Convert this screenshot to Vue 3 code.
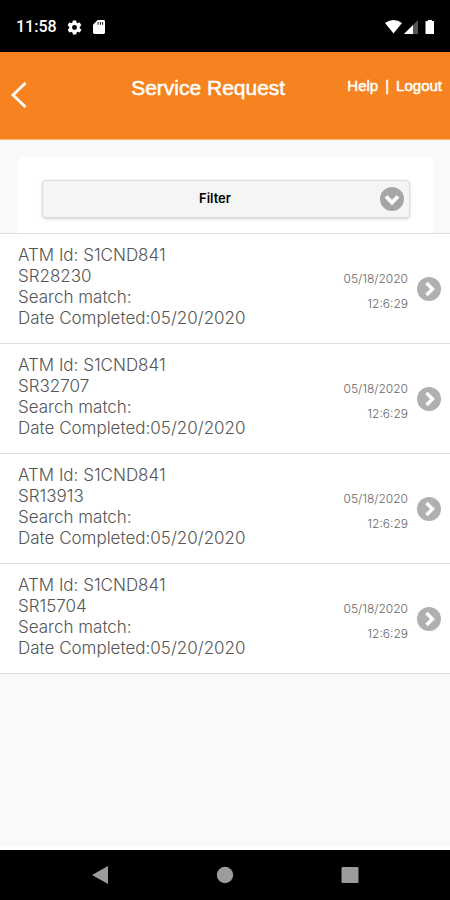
<script setup>
const requests = [
  { atm: 'S1CND841', sr: 'SR28230', completed: '05/20/2020', date: '05/18/2020', time: '12:6:29' },
  { atm: 'S1CND841', sr: 'SR32707', completed: '05/20/2020', date: '05/18/2020', time: '12:6:29' },
  { atm: 'S1CND841', sr: 'SR13913', completed: '05/20/2020', date: '05/18/2020', time: '12:6:29' },
  { atm: 'S1CND841', sr: 'SR15704', completed: '05/20/2020', date: '05/18/2020', time: '12:6:29' }
]
</script>

<template>
  <div class="screen">
    <div class="status">
      <span class="clock">11:58</span>
      <svg class="gear" viewBox="0 0 24 24" aria-hidden="true">
        <path fill="#fff" fill-rule="evenodd" d="M19.4 13c0-.3.1-.6.1-1s0-.7-.1-1l2.1-1.700c.2-.1.2-.4.1-.6l-2-3.500c-.1-.2-.4-.3-.6-.2l-2.500 1c-.5-.4-1.100-.7-1.700-1l-.4-2.600c0-.2-.2-.4-.4-.4h-4c-.3 0-.5.2-.5.4l-.4 2.600c-.6.3-1.200.6-1.700 1l-2.500-1c-.2-.1-.5 0-.6.2l-2 3.500c-.1.2-.1.500.1.600L4.600 11c0 .3-.1.600-.1 1s0 .7.1 1l-2.100 1.700c-.2.100-.2.400-.1.600l2 3.500c.1.200.4.300.6.200l2.500-1c.5.400 1.100.7 1.700 1l.4 2.600c0 .2.200.4.500.4h4c.2 0 .4-.2.4-.4l.4-2.600c.6-.3 1.200-.6 1.700-1l2.500 1c.2.100.5 0 .6-.2l2-3.500c.1-.2.100-.5-.1-.6zM12 15.500a3.500 3.500 0 1 1 0-7 3.500 3.500 0 0 1 0 7z" />
      </svg>
      <svg class="card-icon" viewBox="0 0 13 15" aria-hidden="true">
        <path fill="#fff" d="M5 0h6.500A1.500 1.500 0 0 1 13 1.500v12a1.500 1.500 0 0 1-1.500 1.500h-10A1.500 1.500 0 0 1 0 13.500V5z" />
        <path fill="#000" d="M5 2h1v3H5zM7.500 2h1v3h-1zM10 2h1v3h-1z" />
      </svg>
      <svg class="signals" viewBox="0 0 50 16" aria-hidden="true">
        <path fill="#fff" d="M0 4q8.500-6 17 0L8.500 14.500z" />
        <path fill="#555" d="M33 1v14H19z" />
        <path fill="#fff" d="M28 6v9h-9z" />
        <path fill="#fff" d="M43 1h4v1h2v13h-8.500V2H43z" />
      </svg>
    </div>

    <header class="bar">
      <button class="back" type="button" aria-label="Back">
        <svg viewBox="0 0 16 26" aria-hidden="true">
          <path d="M14.500 1L2 13l12.500 12" fill="none" stroke="#fff" stroke-width="2.800" />
        </svg>
      </button>
      <h1>Service Request</h1>
      <nav class="links"><a href="#help">Help</a><span>|</span><a href="#logout">Logout</a></nav>
    </header>

    <main class="content">
      <div class="filter-card">
        <button class="filter" type="button">
          <span>Filter</span>
          <svg class="disc" viewBox="0 0 24 24" aria-hidden="true">
            <circle cx="12" cy="12" r="12" fill="#a6a6a6" />
            <path d="M6 9.500l6 6 6-6" fill="none" stroke="#fff" stroke-width="3.800" />
          </svg>
        </button>
      </div>
      <ul class="list">
        <li v-for="r in requests" :key="r.sr">
          <a class="row" :href="'#' + r.sr">
            <span class="info">
              <span>ATM Id: {{ r.atm }}</span>
              <span>{{ r.sr }}</span>
              <span>Search match:</span>
              <span>Date Completed:{{ r.completed }}</span>
            </span>
            <span class="when">
              <span>{{ r.date }}</span>
              <span>{{ r.time }}</span>
            </span>
            <svg class="disc" viewBox="0 0 24 24" aria-hidden="true">
              <circle cx="12" cy="12" r="12" fill="#b0b0b0" />
              <path d="M9.500 6l6 6-6 6" fill="none" stroke="#fff" stroke-width="3.400" />
            </svg>
          </a>
        </li>
      </ul>
    </main>

    <footer class="system">
      <button type="button" aria-label="System back">
        <svg viewBox="0 0 18 18" aria-hidden="true"><path fill="#9c9c9c" d="M17 0v18L1 9z" /></svg>
      </button>
      <button type="button" aria-label="Home">
        <svg viewBox="0 0 18 18" aria-hidden="true"><circle cx="9" cy="9" r="8.200" fill="#9c9c9c" /></svg>
      </button>
      <button type="button" aria-label="Recent apps">
        <svg viewBox="0 0 18 18" aria-hidden="true"><rect x="0.500" y="1" width="17" height="16" rx="1" fill="#9c9c9c" /></svg>
      </button>
    </footer>
  </div>
</template>

<style>
body {
  background: #fff;
}
</style>

<style scoped>
.screen {
  display: flex;
  flex-direction: column;
  min-height: 100vh;
  font-family: "Liberation Sans", Arial, sans-serif;
}
button {
  margin: 0;
  padding: 0;
  border: 0;
  background: none;
  font: inherit;
  cursor: pointer;
}
svg {
  display: block;
  flex: none;
}
a {
  color: inherit;
  text-decoration: none;
}
.status {
  display: flex;
  align-items: center;
  height: 52px;
  padding: 2px 15px 0 16px;
  box-sizing: border-box;
  background: #000;
  color: #fff;
}
.clock {
  font: 500 16px/20px Roboto, sans-serif;
}
.gear {
  width: 17px;
  height: 17px;
  margin-left: 9px;
}
.card-icon {
  width: 12px;
  height: 14px;
  margin-left: 10px;
}
.signals {
  width: 50px;
  height: 16px;
  margin-left: auto;
}
.bar {
  display: flex;
  align-items: flex-start;
  height: 88px;
  padding: 24px 8px 0 11px;
  box-sizing: border-box;
  background: #f6831f;
  border-bottom: 1px solid #fbb478;
  color: #fff;
}
.back {
  padding-top: 6px;
}
.back svg {
  width: 16px;
  height: 26px;
}
h1 {
  flex: 1;
  margin: 0;
  padding-left: 42px;
  font-size: 21px;
  line-height: 24px;
  font-weight: 400;
  text-align: center;
  -webkit-text-stroke: 0.5px #fff;
}
.links {
  display: flex;
  gap: 7px;
  font-size: 15px;
  line-height: 20px;
  -webkit-text-stroke: 0.5px #fff;
}
.content {
  flex: 1;
  padding-top: 17px;
  margin-bottom: 4px;
  background: #f9f9f9;
}
.filter-card {
  margin: 0 17px 0 18px;
  padding: 23px 23px 15px 24px;
  background: #fff;
}
.filter {
  display: grid;
  grid-template-columns: 1fr auto 1fr;
  align-items: center;
  width: 100%;
  height: 38px;
  padding: 0 5px;
  box-sizing: border-box;
  border: 1px solid #dcdcdc;
  border-radius: 4px;
  background: #f5f5f5;
  box-shadow: 0 1px 3px rgba(0, 0, 0, 0.18);
  color: #000;
}
.filter span {
  grid-column: 2;
  padding: 0 22px 3px 0;
  font: 600 13px/16px Inter, sans-serif;
}
.filter .disc {
  justify-self: end;
}
.disc {
  width: 24px;
  height: 24px;
}
.list {
  margin: 0;
  padding: 0;
  list-style: none;
  border-top: 1px solid #e0e0e0;
  background: #fff;
}
.list li {
  border-bottom: 1px solid #e0e0e0;
}
.row {
  display: flex;
  align-items: center;
  padding: 0 9px 0 18px;
  color: #555;
}
.info,
.when {
  display: flex;
  flex-direction: column;
}
.info {
  flex: 1;
  padding: 11px 0 14px;
  font: 300 17px/21px Inter, sans-serif;
}
.when {
  align-items: flex-end;
  padding: 5px 9px 0 0;
  font: 300 12px/25px Inter, sans-serif;
  color: #666;
}
.system {
  display: flex;
  justify-content: space-between;
  align-items: center;
  height: 50px;
  padding: 0 91px;
  background: #000;
}
.system svg {
  width: 18px;
  height: 18px;
}
</style>
